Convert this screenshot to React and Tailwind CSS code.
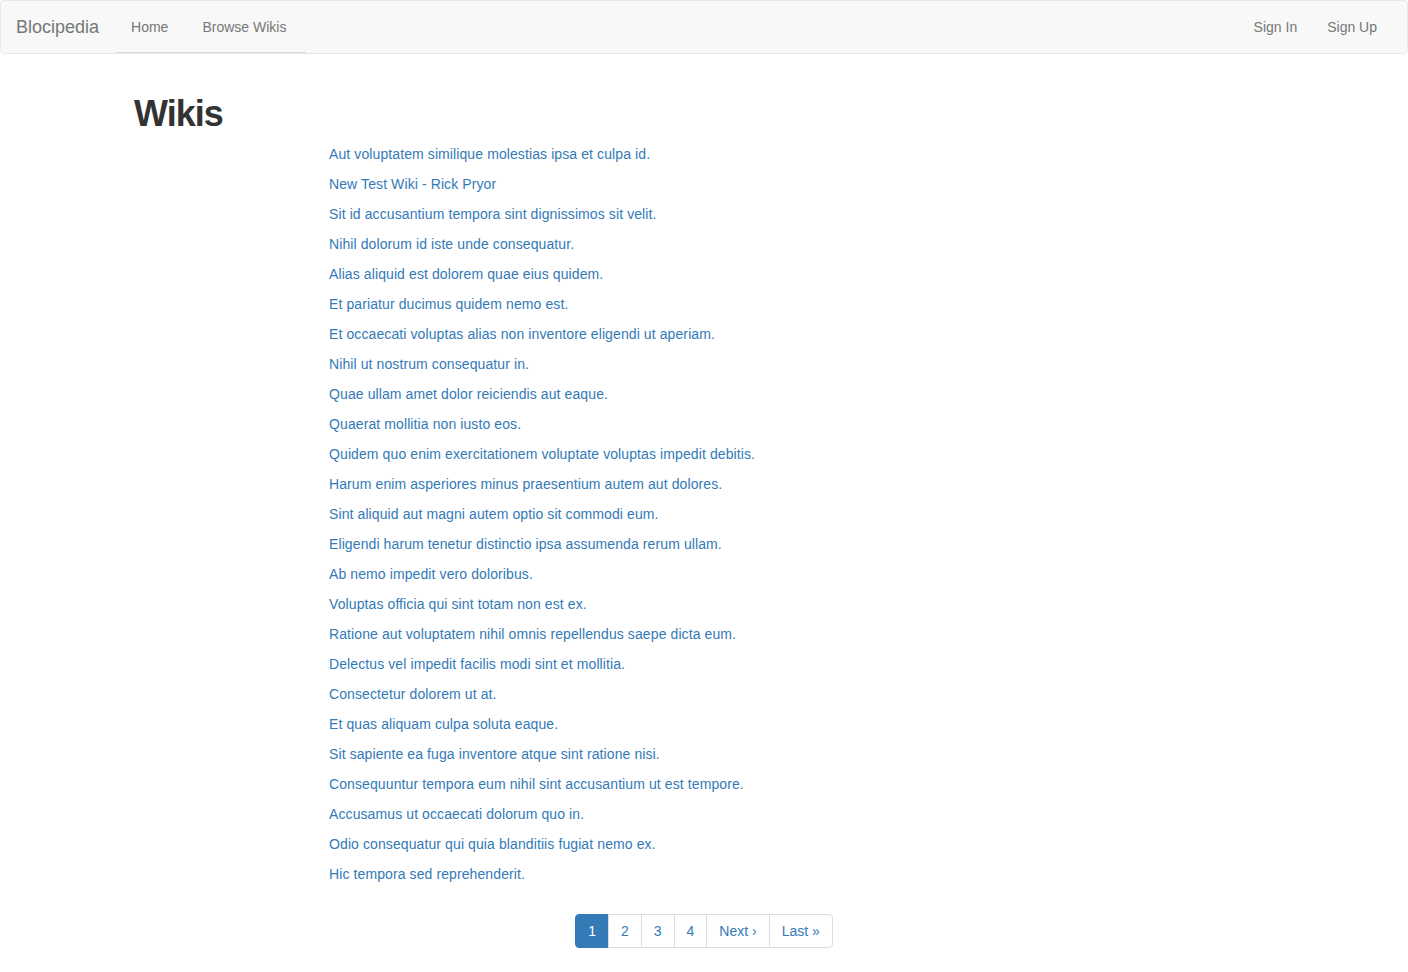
import React from 'react';

const wikis = [
  'Aut voluptatem similique molestias ipsa et culpa id.',
  'New Test Wiki - Rick Pryor',
  'Sit id accusantium tempora sint dignissimos sit velit.',
  'Nihil dolorum id iste unde consequatur.',
  'Alias aliquid est dolorem quae eius quidem.',
  'Et pariatur ducimus quidem nemo est.',
  'Et occaecati voluptas alias non inventore eligendi ut aperiam.',
  'Nihil ut nostrum consequatur in.',
  'Quae ullam amet dolor reiciendis aut eaque.',
  'Quaerat mollitia non iusto eos.',
  'Quidem quo enim exercitationem voluptate voluptas impedit debitis.',
  'Harum enim asperiores minus praesentium autem aut dolores.',
  'Sint aliquid aut magni autem optio sit commodi eum.',
  'Eligendi harum tenetur distinctio ipsa assumenda rerum ullam.',
  'Ab nemo impedit vero doloribus.',
  'Voluptas officia qui sint totam non est ex.',
  'Ratione aut voluptatem nihil omnis repellendus saepe dicta eum.',
  'Delectus vel impedit facilis modi sint et mollitia.',
  'Consectetur dolorem ut at.',
  'Et quas aliquam culpa soluta eaque.',
  'Sit sapiente ea fuga inventore atque sint ratione nisi.',
  'Consequuntur tempora eum nihil sint accusantium ut est tempore.',
  'Accusamus ut occaecati dolorum quo in.',
  'Odio consequatur qui quia blanditiis fugiat nemo ex.',
  'Hic tempora sed reprehenderit.',
];

const pages = ['1', '2', '3', '4', 'Next ›', 'Last »'];

const App = () => {
  return (
    <div className="min-h-screen bg-white text-[14px] leading-[20px] text-[#333] font-['Liberation_Sans',Arial,sans-serif]">
      {/* Navbar */}
      <nav className="flex justify-between items-stretch h-[54px] bg-[#f8f8f8] border border-[#e7e7e7] rounded-[4px] px-[15px]">
        <div className="flex">
          <a className="-ml-[15px] pl-[15px] pr-[17px] pt-[16px] text-[18px] leading-[20px] text-[#777]">Blocipedia</a>
          <ul className="flex w-[190px] h-[52px] border-b border-[#ddd]">
            <li><a className="block px-[15px] pt-[16px] text-[#777]">Home</a></li>
            <li className="ml-[4px]"><a className="block px-[15px] pt-[16px] text-[#777]">Browse Wikis</a></li>
          </ul>
        </div>
        <ul className="flex">
          <li><a className="block px-[15px] pt-[16px] text-[#777]">Sign In</a></li>
          <li><a className="block px-[15px] pt-[16px] text-[#777]">Sign Up</a></li>
        </ul>
      </nav>

      <div className="w-[1170px] mx-auto px-[15px] pt-[20px]">
        <h1 className="mt-[20px] mb-[10px] text-[36px] leading-[39.6px] font-bold tracking-[-1px] text-[#333]">Wikis</h1>

        <div className="ml-[195px] tracking-[0.1px]">
          {wikis.map((w, i) => (
            <p key={i} className="mb-[10px]">
              <a className="text-[#337ab7]">{w}</a>
            </p>
          ))}
        </div>

        <div className="flex justify-center">
          <ul className="flex my-[20px]">
            {pages.map((p, i) => (
              <li key={i}>
                <a
                  className={`block px-[12px] py-[6px] border ${i > 0 ? '-ml-px' : ''} ${
                    i === 0
                      ? 'bg-[#337ab7] border-[#337ab7] text-white rounded-l-[4px]'
                      : 'bg-white border-[#ddd] text-[#337ab7]'
                  } ${i === pages.length - 1 ? 'rounded-r-[4px]' : ''}`}
                >
                  {p}
                </a>
              </li>
            ))}
          </ul>
        </div>
      </div>
    </div>
  );
};

export default App;
